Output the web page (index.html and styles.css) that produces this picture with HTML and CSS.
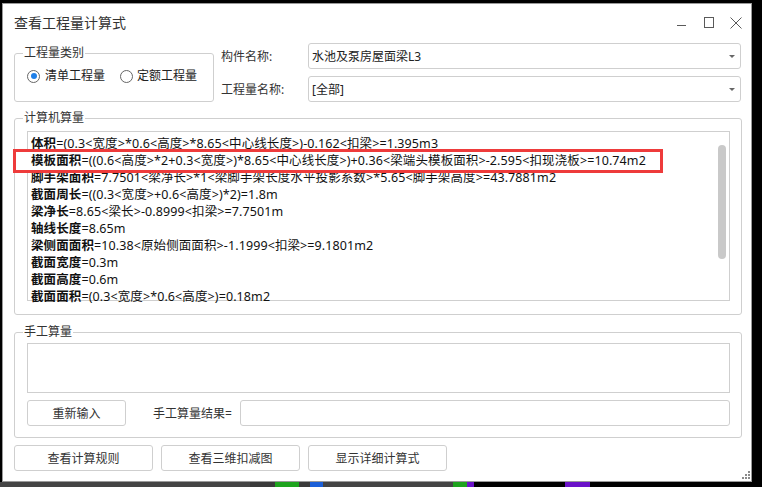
FILE: index.html
```html
<!DOCTYPE html>
<html lang="zh-CN">
<head>
<meta charset="utf-8">
<title>查看工程量计算式</title>
<link rel="stylesheet" href="styles.css">
</head>
<body>
<div class="screen">
  <div class="window">
    <div class="titlebar">
      <span class="title">查看工程量计算式</span>
      <div class="controls">
        <svg class="ctl" viewBox="0 0 12 12" width="12" height="12"><line x1="1" y1="8.5" x2="10" y2="8.5"/></svg>
        <svg class="ctl" viewBox="0 0 12 12" width="12" height="12"><rect x="1.5" y="0.5" width="9" height="10"/></svg>
        <svg class="ctl" viewBox="0 0 12 12" width="12" height="12"><line x1="0.5" y1="0.5" x2="11.5" y2="11.5"/><line x1="11.5" y1="0.5" x2="0.5" y2="11.5"/></svg>
      </div>
    </div>
    <div class="content">
      <div class="row1">
        <fieldset class="group type">
          <legend>工程量类别</legend>
          <div class="radios">
            <span class="radio"><span class="circle on"></span>清单工程量</span>
            <span class="radio"><span class="circle"></span>定额工程量</span>
          </div>
        </fieldset>
        <div class="fields">
          <span class="flabel">构件名称:</span>
          <div class="combo"><span>水池及泵房屋面梁L3</span><i class="arrow"></i></div>
          <span class="flabel">工程量名称:</span>
          <div class="combo"><span>[全部]</span><i class="arrow"></i></div>
        </div>
      </div>

      <fieldset class="group calc">
        <legend>计算机算量</legend>
        <div class="calc-inner">
          <div class="formula">
            <div class="line"><b>体积</b>=(0.3&lt;宽度&gt;*0.6&lt;高度&gt;*8.65&lt;中心线长度&gt;)-0.162&lt;扣梁&gt;=1.395m3</div>
            <div class="line hl"><b>模板面积</b>=((0.6&lt;高度&gt;*2+0.3&lt;宽度&gt;)*8.65&lt;中心线长度&gt;)+0.36&lt;梁端头模板面积&gt;-2.595&lt;扣现浇板&gt;=10.74m2</div>
            <div class="line"><b>脚手架面积</b>=7.7501&lt;梁净长&gt;*1&lt;梁脚手架长度水平投影系数&gt;*5.65&lt;脚手架高度&gt;=43.7881m2</div>
            <div class="line"><b>截面周长</b>=((0.3&lt;宽度&gt;+0.6&lt;高度&gt;)*2)=1.8m</div>
            <div class="line"><b>梁净长</b>=8.65&lt;梁长&gt;-0.8999&lt;扣梁&gt;=7.7501m</div>
            <div class="line"><b>轴线长度</b>=8.65m</div>
            <div class="line"><b>梁侧面面积</b>=10.38&lt;原始侧面面积&gt;-1.1999&lt;扣梁&gt;=9.1801m2</div>
            <div class="line"><b>截面宽度</b>=0.3m</div>
            <div class="line"><b>截面高度</b>=0.6m</div>
            <div class="line"><b>截面面积</b>=(0.3&lt;宽度&gt;*0.6&lt;高度&gt;)=0.18m2</div>
            <div class="thumb"></div>
          </div>
        </div>
      </fieldset>

      <fieldset class="group manual">
        <legend>手工算量</legend>
        <div class="manual-inner">
          <div class="textarea"></div>
          <div class="mrow">
            <button class="btn reinput">重新输入</button>
            <span class="mlabel">手工算量结果=</span>
            <div class="input"></div>
          </div>
        </div>
      </fieldset>

      <div class="actions">
        <button class="btn act">查看计算规则</button>
        <button class="btn act">查看三维扣减图</button>
        <button class="btn act">显示详细计算式</button>
      </div>
    </div>
    <svg class="grip" viewBox="0 0 8 8" width="8" height="8">
      <rect x="6" y="0" width="2" height="2"/>
      <rect x="3" y="3" width="2" height="2"/><rect x="6" y="3" width="2" height="2"/>
      <rect x="0" y="6" width="2" height="2"/><rect x="3" y="6" width="2" height="2"/><rect x="6" y="6" width="2" height="2"/>
    </svg>
  </div>
  <div class="taskbar">
    <span class="seg s-gray1"></span>
    <span class="seg s-gray2"></span>
    <span class="seg s-green"></span>
    <span class="seg s-gray3"></span>
    <span class="seg s-blue"></span>
    <span class="seg s-gray4"></span>
    <span class="seg s-green2"></span>
    <span class="seg s-purple"></span>
    <span class="seg s-black"></span>
    <span class="seg s-purple2"></span>
    <span class="seg s-black2"></span>
  </div>
</div>
</body>
</html>
```

FILE: styles.css
```css
* { box-sizing: border-box; }

html, body {
  margin: 0;
  padding: 0;
  background: #000;
}

body {
  font-family: "Noto Sans", "Noto Sans CJK SC", sans-serif;
  font-size: 12px;
  color: #333;
}

.screen {
  width: 762px;
  height: 487px;
  padding: 3px 10px 0 2px;
  overflow: hidden;
}

.window {
  position: relative;
  width: 750px;
  height: 479px;
  background: #fff;
  border: 1px solid #9a9a9a;
  display: flex;
  flex-direction: column;
}

/* title bar */
.titlebar {
  height: 39px;
  display: flex;
  align-items: flex-start;
  padding: 0 9px 0 11px;
  flex: none;
}

.title {
  font-size: 14px;
  line-height: 20px;
  padding-top: 9px;
  color: #333;
}

.controls {
  margin-left: auto;
  margin-top: 13px;
  display: flex;
  gap: 15px;
}

.ctl {
  display: block;
  fill: none;
  stroke: #5a5a5a;
  stroke-width: 1;
}

/* content */
.content {
  padding: 0 9px 0 11px;
  display: flex;
  flex-direction: column;
}

.group {
  margin: 0;
  padding: 0;
  border: 1px solid #cfcfcf;
  border-radius: 3px;
  min-width: 0;
}

.group legend {
  margin-left: 8px;
  padding: 0 1px;
  font-size: 12px;
  line-height: 16px;
  color: #333;
}

.row1 {
  display: flex;
  align-items: flex-start;
}

.type {
  width: 200px;
  margin-top: 2px;
  flex: none;
}

.radios {
  height: 40px;
  padding: 7px 0 0 12px;
  display: flex;
  align-items: flex-start;
}

.radio {
  display: flex;
  align-items: center;
  gap: 5px;
  line-height: 16px;
  color: #222;
}

.radio + .radio {
  margin-left: 15px;
  gap: 4px;
}

.circle {
  width: 13px;
  height: 13px;
  border: 1px solid #666;
  border-radius: 50%;
  display: flex;
  align-items: center;
  justify-content: center;
  flex: none;
}

.circle.on::after {
  content: "";
  width: 6px;
  height: 6px;
  border-radius: 50%;
  background: #1f7fe8;
}

.fields {
  margin-left: 7px;
  display: grid;
  grid-template-columns: 87px 433px;
  grid-auto-rows: 26px;
  row-gap: 7px;
  align-items: center;
}

.flabel {
  color: #333;
}

.combo {
  height: 26px;
  border: 1px solid #cfcfcf;
  border-radius: 3px;
  padding: 0 0 0 3px;
  display: flex;
  align-items: center;
  color: #222;
}

.arrow {
  margin-left: auto;
  margin-right: 5px;
  width: 0;
  height: 0;
  border-left: 3px solid transparent;
  border-right: 3px solid transparent;
  border-top: 3px solid #666;
}

/* computed */
.calc {
  margin-top: 8px;
}

.calc-inner {
  padding: 5px 11px 13px 12px;
}

.formula {
  position: relative;
  height: 170px;
  border: 1px solid #cfcfcf;
  padding: 3px 0 0 3px;
  font-size: 12.5px;
  line-height: 17px;
  letter-spacing: 0.1px;
  color: #111;
}

.line {
  white-space: nowrap;
  height: 17px;
}

.line b {
  font-weight: bold;
}

.line.hl {
  position: relative;
  z-index: 1;
  width: 650px;
  height: 24px;
  margin: -3.5px 0 -3.5px -18px;
  padding: 0.5px 0 0 15px;
  border: 3px solid #ee3b3b;
  background: #fff;
}

.thumb {
  position: absolute;
  right: 3px;
  top: 13px;
  width: 8px;
  height: 114px;
  border-radius: 4px;
  background: #c9c9c9;
}

/* manual */
.manual {
  margin-top: 9px;
}

.manual-inner {
  padding: 3px 11px 11px 12px;
}

.textarea {
  height: 50px;
  border: 1px solid #cfcfcf;
}

.mrow {
  margin-top: 7px;
  display: flex;
  align-items: center;
}

.btn {
  height: 26px;
  border: 1px solid #cfcfcf;
  border-radius: 3px;
  background: #fff;
  font-family: "Noto Sans", "Noto Sans CJK SC", sans-serif;
  font-size: 12px;
  color: #333;
  padding: 0;
}

.reinput {
  width: 99px;
}

.mlabel {
  margin-left: 27px;
  color: #333;
}

.input {
  margin-left: 8px;
  flex: 1;
  height: 26px;
  border: 1px solid #cfcfcf;
  border-radius: 3px;
}

.actions {
  margin-top: 7px;
  display: flex;
  gap: 8px;
}

.act {
  width: 139px;
}

.grip {
  position: absolute;
  right: 1px;
  bottom: 2px;
  fill: #8a8a8a;
}

/* strip below window */
.taskbar {
  height: 5px;
  display: flex;
  margin-left: -2px;
  width: 762px;
}

.seg { height: 5px; display: block; }
.s-gray1 { width: 250px; background: #444; }
.s-gray2 { width: 25px; background: #3a3a3a; }
.s-green { width: 24px; background: #1ea31e; }
.s-gray3 { width: 11px; background: #3a3a3a; }
.s-blue { width: 13px; background: #1b5fd8; }
.s-gray4 { width: 130px; background: #444; }
.s-green2 { width: 14px; background: #1ea31e; }
.s-purple { width: 7px; background: #6a12c8; }
.s-black { width: 91px; background: #000; }
.s-purple2 { width: 25px; background: #6a12c8; }
.s-black2 { flex: 1; background: #000; }
```
